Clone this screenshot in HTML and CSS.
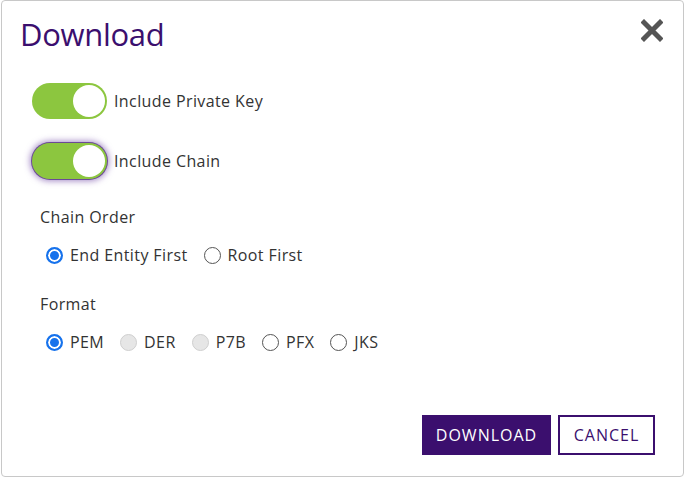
FILE: index.html
```html
<!DOCTYPE html>
<html>
<head>
    <meta charset="UTF-8">
    <title>Download</title>
    <link rel="stylesheet" href="styles.css">
</head>
<body>
    <div class="dialog">
        <div class="head">
            <h1>Download</h1>
            <svg class="close" width="22" height="23" viewBox="0 0 22 23">
                <path d="M3 3.5 L19 19.5 M19 3.5 L3 19.5" stroke="#555" stroke-width="5" stroke-linecap="square"/>
            </svg>
        </div>
        <div class="toggles">
            <label class="row">
                <span class="switch"><span class="knob"></span></span>
                Include Private Key
            </label>
            <label class="row">
                <span class="switch focus"><span class="knob"></span></span>
                Include Chain
            </label>
        </div>
        <div class="group first">
            <p class="caption">Chain Order</p>
            <div class="options">
                <label class="opt"><input type="radio" name="order" checked> End Entity First</label>
                <label class="opt"><input type="radio" name="order"> Root First</label>
            </div>
        </div>
        <div class="group">
            <p class="caption">Format</p>
            <div class="options">
                <label class="opt"><input type="radio" name="fmt" checked> PEM</label>
                <label class="opt"><input type="radio" name="fmt" disabled> DER</label>
                <label class="opt"><input type="radio" name="fmt" disabled> P7B</label>
                <label class="opt"><input type="radio" name="fmt"> PFX</label>
                <label class="opt"><input type="radio" name="fmt"> JKS</label>
            </div>
        </div>
        <div class="buttons">
            <button class="primary">DOWNLOAD</button>
            <button class="secondary">CANCEL</button>
        </div>
    </div>
</body>
</html>
```

FILE: styles.css
```css
*{
    margin: 0;
    padding: 0;
    box-sizing: border-box;
}
body{
    background-color: white;
    font-family: "Open Sans", "Liberation Sans", sans-serif;
    color: #333;
    font-size: 16px;
    letter-spacing: 0.4px;
}
.dialog{
    width: 683px;
    height: 477px;
    margin-left: 1px;
    border: 1px solid #c8c8c8;
    border-radius: 4px;
    padding: 13px 20px 21px 19px;
    display: flex;
    flex-direction: column;
}
.head{
    display: flex;
    justify-content: space-between;
    align-items: flex-start;
}
h1{
    margin-left: -1px;
    font-size: 31px;
    line-height: 40px;
    font-weight: 500;
    letter-spacing: -0.3px;
    color: #3b0f6e;
}
.close{
    margin-top: 5px;
}
.toggles{
    margin-top: 29px;
    margin-left: 11px;
    display: flex;
    flex-direction: column;
    gap: 24px;
}
.row{
    display: flex;
    align-items: center;
    gap: 7px;
    height: 36px;
}
.switch{
    width: 75px;
    height: 36px;
    border-radius: 18px;
    background-color: #8cc63f;
    position: relative;
}
.switch.focus{
    box-shadow: 0 0 0 1px #6b4a96, 0 0 6px 2px rgba(104, 60, 160, 0.6);
}
.knob{
    position: absolute;
    top: 2px;
    right: 2px;
    width: 32px;
    height: 32px;
    border-radius: 50%;
    background-color: white;
}
.group{
    margin-top: 29px;
    margin-left: 19px;
}
.group.first{
    margin-top: 28px;
}
.caption{
    line-height: 20px;
}
.options{
    margin-top: 18px;
    margin-left: 6px;
    display: flex;
    gap: 15px;
}
.options .opt + .opt{
    margin-left: 1px;
}
.opt{
    display: flex;
    align-items: center;
    gap: 7px;
    line-height: 20px;
}
.opt input{
    appearance: none;
    width: 17px;
    height: 17px;
    border-radius: 50%;
    border: 1.5px solid #555;
    background-color: white;
}
.opt input:checked{
    border: 2px solid #1672ec;
    background-color: #1672ec;
    box-shadow: inset 0 0 0 2px white;
}
.opt input:disabled{
    border-color: #cfcfcf;
    background-color: #e6e6e6;
}
.buttons{
    margin-top: auto;
    margin-right: 8px;
    display: flex;
    justify-content: flex-end;
    gap: 7px;
}
button{
    height: 40px;
    font-family: inherit;
    font-size: 16px;
    border-radius: 0;
    letter-spacing: 1px;
}
.primary{
    width: 129px;
    background-color: #3b0f6e;
    border: 0;
    color: white;
}
.secondary{
    width: 97px;
    background-color: white;
    border: 2px solid #3b0f6e;
    color: #3b0f6e;
}
```
